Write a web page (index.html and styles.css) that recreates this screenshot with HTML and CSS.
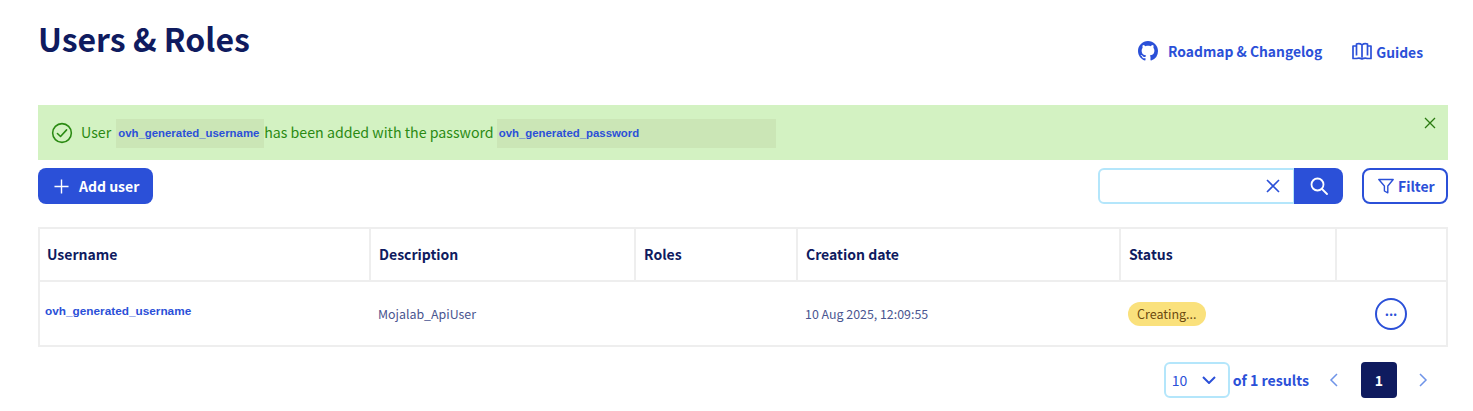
FILE: index.html
```html
<!DOCTYPE html>
<html>
<head>
  <title>Users &amp; Roles</title>
  <link rel="stylesheet" href="styles.css">
</head>
<body>
  <div class="page-head">
    <h1>Users &amp; Roles</h1>
    <div class="head-links">
      <a class="head-link" href="#">
        <svg class="icon-github" viewBox="0 0 16 16" fill="currentColor"><path d="M8 0C3.58 0 0 3.58 0 8c0 3.54 2.29 6.53 5.47 7.59.4.07.55-.17.55-.38 0-.19-.01-.82-.01-1.49-2.01.37-2.53-.49-2.69-.94-.09-.23-.48-.94-.82-1.13-.28-.15-.68-.52-.01-.53.63-.01 1.08.58 1.23.82.72 1.21 1.87.87 2.33.66.07-.52.28-.87.51-1.07-1.78-.2-3.64-.89-3.64-3.95 0-.87.31-1.59.82-2.15-.08-.2-.36-1.02.08-2.12 0 0 .67-.21 2.2.82.64-.18 1.32-.27 2-.27s1.36.09 2 .27c1.53-1.04 2.2-.82 2.2-.82.44 1.1.16 1.92.08 2.12.51.56.82 1.27.82 2.15 0 3.07-1.87 3.75-3.65 3.95.29.25.54.73.54 1.48 0 1.07-.01 1.93-.01 2.2 0 .21.15.46.55.38A8.01 8.01 0 0 0 16 8c0-4.42-3.58-8-8-8z"/></svg>
        Roadmap &amp; Changelog
      </a>
      <a class="head-link guides" href="#">
        <svg class="icon-guides" viewBox="0 0 20 18" fill="none" stroke="currentColor" stroke-width="1.7" stroke-linejoin="round"><path d="M4 4H1v12.5h3.5c2-.8 3.7-.6 5.5.5 1.8-1.1 3.5-1.3 5.5-.5H19V4h-3"/><path d="M4.5 13.5V2c2-.8 3.7-.6 5.5.8v13M10 2.8c1.8-1.4 3.5-1.6 5.5-.8v11.5"/></svg>
        Guides
      </a>
    </div>
  </div>

  <div class="alert">
    <svg class="alert-check" viewBox="0 0 24 24" fill="none" stroke="currentColor" stroke-width="1.7" stroke-linecap="round" stroke-linejoin="round"><circle cx="12" cy="12" r="10.2"/><path d="M7 12.5l3.4 3.3L17 8.6"/></svg>
    <span class="alert-text">User</span>
    <code class="clip clip-user">ovh_generated_username</code>
    <span class="alert-text">has been added with the password</span>
    <code class="clip clip-pass">ovh_generated_password</code>
    <svg class="alert-close" viewBox="0 0 12 12" fill="none" stroke="currentColor" stroke-width="1.3"><path d="M1 1l10 10M11 1L1 11"/></svg>
  </div>

  <div class="toolbar">
    <button class="btn-add">
      <svg viewBox="0 0 16 16" fill="none" stroke="currentColor" stroke-width="1.5"><path d="M8 .5v15M.5 8h15"/></svg>
      Add user
    </button>
    <div class="toolbar-right">
      <div class="search">
        <div class="search-input">
          <svg viewBox="0 0 14 14" fill="none" stroke="currentColor" stroke-width="1.6"><path d="M1 1l12 12M13 1L1 13"/></svg>
        </div>
        <button class="search-btn">
          <svg viewBox="0 0 18 18" fill="none" stroke="currentColor" stroke-width="1.8" stroke-linecap="round"><circle cx="7.5" cy="7.5" r="6"/><path d="M12 12l5 5"/></svg>
        </button>
      </div>
      <button class="btn-filter">
        <svg viewBox="0 0 16 16" fill="none" stroke="currentColor" stroke-width="1.4" stroke-linejoin="round"><path d="M.8 1.5h14.4L9.8 8v6.8L6.4 13V8z"/></svg>
        Filter
      </button>
    </div>
  </div>

  <table class="users">
    <colgroup>
      <col class="col-name"><col class="col-desc"><col class="col-roles"><col class="col-date"><col class="col-status"><col class="col-menu">
    </colgroup>
    <thead>
      <tr>
        <th>Username</th>
        <th>Description</th>
        <th>Roles</th>
        <th>Creation date</th>
        <th>Status</th>
        <th></th>
      </tr>
    </thead>
    <tbody>
      <tr>
        <td class="cell-user"><code>ovh_generated_username</code></td>
        <td>Mojalab_ApiUser</td>
        <td></td>
        <td>10 Aug 2025, 12:09:55</td>
        <td><span class="badge">Creating...</span></td>
        <td class="cell-menu"><button class="btn-menu">...</button></td>
      </tr>
    </tbody>
  </table>

  <div class="pager">
    <div class="page-size">
      <span>10</span>
      <svg viewBox="0 0 14 8" fill="none" stroke="currentColor" stroke-width="2"><path d="M1 1l6 6 6-6"/></svg>
    </div>
    <span class="results">of 1 results</span>
    <svg class="arrow arrow-prev" viewBox="0 0 9 14" fill="none" stroke="currentColor" stroke-width="1.5"><path d="M8 1L2 7l6 6"/></svg>
    <span class="page-current">1</span>
    <svg class="arrow arrow-next" viewBox="0 0 9 14" fill="none" stroke="currentColor" stroke-width="1.5"><path d="M1 1l6 6-6 6"/></svg>
  </div>
</body>
</html>
```

FILE: styles.css
```css
* {
  box-sizing: border-box;
}

body {
  margin: 0;
  padding: 0 25px 0 38px;
  background-color: #ffffff;
  font-family: "Noto Sans CJK SC", "Noto Sans", sans-serif;
  font-size: 14px;
  color: #0f1b5f;
  overflow: hidden;
}

button {
  font-family: inherit;
  cursor: pointer;
}

a {
  text-decoration: none;
}

/* Title row */

.page-head {
  display: flex;
  justify-content: space-between;
  height: 105px;
}

h1 {
  margin: 16px 0 0;
  font-size: 32px;
  line-height: 44px;
  font-weight: 700;
  color: #0f1b5f;
}

.head-links {
  display: flex;
  align-items: flex-start;
  padding-top: 40px;
  padding-right: 25px;
}

.head-link {
  display: flex;
  align-items: center;
  height: 22px;
  font-size: 13.85px;
  font-weight: 600;
  line-height: 22px;
  color: #2b50d8;
}

.icon-github {
  width: 20px;
  height: 20px;
  margin-right: 10px;
}

.guides {
  margin-left: 30px;
  margin-top: 1px;
}

.icon-guides {
  width: 20px;
  height: 18px;
  margin-right: 4px;
  margin-top: -3px;
}

/* Success message */

.alert {
  position: relative;
  display: flex;
  align-items: center;
  height: 55px;
  padding-left: 13px;
  background-color: #d3f2c2;
  color: #2a8a12;
  font-size: 14.2px;
}

.alert-check {
  width: 22px;
  height: 22px;
  margin-right: 8px;
  flex: none;
}

.alert-text {
  line-height: 22px;
  margin-top: -1px;
}

.clip {
  display: block;
  height: 29px;
  line-height: 29px;
  margin: 2px 0 0;
  background-color: #cbe6b6;
  font-family: "Liberation Sans", sans-serif;
  font-size: 11.4px;
  font-weight: 700;
  color: #2b50d8;
}

.clip-user {
  width: 148px;
  margin-left: 5px;
  padding-left: 2px;
}

.clip-pass {
  width: 279px;
  margin-left: 3px;
  padding-left: 2px;
}

.alert-close {
  position: absolute;
  top: 12px;
  right: 12px;
  width: 12px;
  height: 12px;
  color: #2a7a10;
}

/* Actions */

.toolbar {
  display: flex;
  justify-content: space-between;
  margin-top: 8px;
  height: 36px;
}

.btn-add {
  display: flex;
  align-items: center;
  width: 115px;
  height: 36px;
  padding: 0 0 0 16px;
  border: 0;
  border-radius: 8px;
  background-color: #2b50d8;
  color: #ffffff;
  font-size: 14px;
  font-weight: 600;
}

.btn-add svg {
  width: 15px;
  height: 15px;
  margin-right: 10px;
}

.toolbar-right {
  display: flex;
}

.search {
  display: flex;
}

.search-input {
  display: flex;
  align-items: center;
  justify-content: flex-end;
  width: 196px;
  height: 36px;
  padding-right: 13px;
  border: 2px solid #b4e6fb;
  border-right-width: 1px;
  border-radius: 6px 0 0 6px;
  color: #2b50d8;
}

.search-input svg {
  width: 14px;
  height: 14px;
}

.search-btn {
  display: flex;
  align-items: center;
  justify-content: center;
  width: 49px;
  height: 36px;
  padding: 0;
  border: 0;
  border-radius: 0 8px 8px 0;
  background-color: #2b50d8;
  color: #ffffff;
}

.search-btn svg {
  width: 18px;
  height: 18px;
}

.btn-filter {
  display: flex;
  align-items: center;
  justify-content: flex-start;
  width: 86px;
  height: 36px;
  margin-left: 19px;
  padding: 0 0 0 14px;
  border: 2px solid #2b50d8;
  border-radius: 8px;
  background-color: #ffffff;
  color: #2b50d8;
  font-size: 14px;
  font-weight: 600;
}

.btn-filter svg {
  width: 16px;
  height: 16px;
  margin-right: 4px;
}

/* Table */

.users {
  width: 100%;
  margin-top: 23px;
  border: 2px solid #eeeeee;
  border-collapse: collapse;
  table-layout: fixed;
}

.col-name { width: 331px; }
.col-desc { width: 265px; }
.col-roles { width: 162px; }
.col-date { width: 323px; }
.col-status { width: 216px; }

th {
  height: 53px;
  padding: 0 8px 2px;
  border-bottom: 2px solid #eeeeee;
  border-left: 2px solid #eeeeee;
  font-size: 14px;
  font-weight: 600;
  text-align: left;
  color: #0f1b5f;
}

th:first-child {
  padding-left: 7px;
}

td {
  height: 65px;
  padding: 0 8px;
  font-size: 12.4px;
  color: #4a5590;
}

.cell-user {
  padding: 0 0 8px 5px;
}

.cell-user code {
  font-family: "Liberation Sans", sans-serif;
  font-size: 11.8px;
  font-weight: 700;
  color: #2b50d8;
}

.badge {
  display: inline-block;
  height: 24px;
  padding: 0 9px;
  border-radius: 12px;
  background-color: #fae17c;
  color: #6b4a10;
  font-size: 12.5px;
  line-height: 24px;
}

.cell-menu {
  padding: 0 0 0 39px;
}

.btn-menu {
  display: block;
  width: 32px;
  height: 32px;
  padding: 0 0 6px;
  border: 2px solid #2b50d8;
  border-radius: 50%;
  background-color: #ffffff;
  color: #2b50d8;
  font-size: 13px;
  font-weight: 700;
  line-height: 14px;
}

/* Pagination */

.pager {
  display: flex;
  justify-content: flex-end;
  align-items: center;
  margin-top: 15px;
  height: 36px;
  color: #2b50d8;
}

.page-size {
  display: flex;
  align-items: center;
  justify-content: space-between;
  width: 66px;
  height: 36px;
  padding: 0 12px 0 6px;
  border: 2px solid #b4e6fb;
  border-radius: 6px;
  font-size: 14px;
}

.page-size svg {
  width: 14px;
  height: 8px;
}

.results {
  margin-left: 3px;
  font-size: 14.15px;
  font-weight: 600;
}

.arrow {
  width: 9px;
  height: 14px;
  color: #6f94e8;
}

.arrow-prev {
  margin-left: 20px;
  margin-right: 23px;
}

.arrow-next {
  margin-left: 22px;
  margin-right: 20px;
}

.page-current {
  width: 36px;
  height: 36px;
  border-radius: 4px;
  background-color: #0f1b5f;
  color: #ffffff;
  font-size: 14px;
  font-weight: 700;
  line-height: 36px;
  text-align: center;
}
```
